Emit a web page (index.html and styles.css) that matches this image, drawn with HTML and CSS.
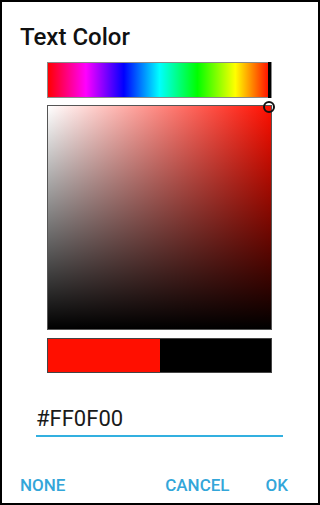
FILE: index.html
```html
<!DOCTYPE html>
<html>
<head>
<meta charset="utf-8">
<link rel="stylesheet" href="styles.css">
</head>
<body>
<div class="dialog">
  <div class="title">Text Color</div>
  <div class="picker">
    <div class="hue"><div class="hue-marker"></div></div>
    <div class="sv"><div class="sv-marker"></div></div>
    <div class="preview">
      <div class="preview-new"></div>
      <div class="preview-old"></div>
    </div>
  </div>
  <div class="hex">#FF0F00</div>
  <div class="buttons">
    <span class="btn btn-none">NONE</span>
    <span class="btn btn-cancel">CANCEL</span>
    <span class="btn btn-ok">OK</span>
  </div>
</div>
</body>
</html>
```
FILE: styles.css
```css
html, body {
  margin: 0;
  padding: 0;
  background: #fff;
}
.dialog {
  box-sizing: border-box;
  width: 320px;
  height: 505px;
  border: 2px solid #000;
  padding-top: 22px;
  font-family: Roboto, "Liberation Sans", sans-serif;
  background: #fff;
}
.title {
  margin-left: 18px;
  font-size: 24px;
  line-height: 26px;
  font-weight: 500;
  color: #111;
}
.picker {
  margin: 12px 0 0 45px;
  width: 225px;
}
.hue {
  position: relative;
  box-sizing: border-box;
  height: 36px;
  border: 1px solid #8a8a8a;
  background: linear-gradient(to right, #ff0000 0%, #ff00ff 17%, #0000ff 34%, #00ffff 50%, #00ff00 67%, #ffff00 84%, #ff0000 100%);
}
.hue-marker {
  position: absolute;
  right: 0;
  top: -1px;
  bottom: -1px;
  width: 3px;
  background: #000;
}
.sv {
  position: relative;
  box-sizing: border-box;
  margin-top: 7px;
  height: 225px;
  border: 1px solid #555;
  background:
    linear-gradient(to top, #000, rgba(0,0,0,0)),
    linear-gradient(to right, #fff, #ff0f00);
}
.sv-marker {
  position: absolute;
  box-sizing: border-box;
  width: 12px;
  height: 12px;
  right: -4px;
  top: -5px;
  border: 2px solid #111;
  border-radius: 50%;
}
.preview {
  display: flex;
  box-sizing: border-box;
  margin-top: 8px;
  height: 35px;
  border: 1px solid #444;
}
.preview-new {
  width: 112px;
  background: #ff0f00;
}
.preview-old {
  flex: 1;
  background: #000;
}
.hex {
  margin: 33px 0 0 34px;
  width: 247px;
  font-size: 22px;
  line-height: 26px;
  color: #1a1a1a;
  padding-bottom: 3px;
  border-bottom: 2px solid #33b0e0;
}
.buttons {
  display: flex;
  margin-top: 38px;
  padding: 0 30px 0 18px;
  font-size: 17px;
  line-height: 20px;
  font-weight: 500;
  color: #33a6d9;
}
.btn-none {
  margin-right: auto;
}
.btn-ok {
  margin-left: 36px;
}
```
